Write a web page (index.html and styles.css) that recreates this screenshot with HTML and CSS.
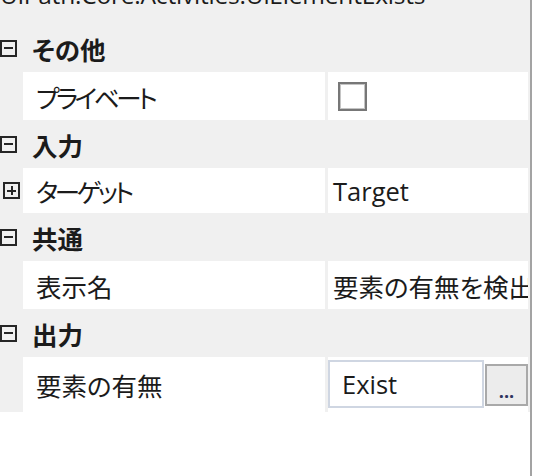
FILE: index.html
```html
<!DOCTYPE html>
<html lang="ja">
<head>
  <meta charset="UTF-8" />
  <title>プロパティ - UiElementExists</title>
  <link rel="stylesheet" href="styles.css">
</head>
<body>
  <div class="panel">
    <div class="title"><span>UiPath.Core.Activities.UiElementExists</span></div>

    <div class="grid">
      <!-- その他 -->
      <div class="cat">
        <span class="toggle minus"></span>
        <span class="cat-name">その他</span>
      </div>
      <div class="prop">
        <div class="gutter"></div>
        <div class="name kana">プライベート</div>
        <div class="value"><span class="check"></span></div>
      </div>

      <!-- 入力 -->
      <div class="cat">
        <span class="toggle minus"></span>
        <span class="cat-name">入力</span>
      </div>
      <div class="prop prop-short">
        <div class="gutter"><span class="toggle plus"></span></div>
        <div class="name kana">ターゲット</div>
        <div class="value">Target</div>
      </div>

      <!-- 共通 -->
      <div class="cat">
        <span class="toggle minus"></span>
        <span class="cat-name">共通</span>
      </div>
      <div class="prop">
        <div class="gutter"></div>
        <div class="name">表示名</div>
        <div class="value">要素の有無を検出</div>
      </div>

      <!-- 出力 -->
      <div class="cat">
        <span class="toggle minus"></span>
        <span class="cat-name">出力</span>
      </div>
      <div class="prop prop-edit">
        <div class="gutter"></div>
        <div class="name">要素の有無</div>
        <div class="value editor">
          <div class="textbox">Exist</div>
          <button class="more">...</button>
        </div>
      </div>
    </div>
  </div>
</body>
</html>
```

FILE: styles.css
```css
/*
  ---------------------
  GLOBAL
  ---------------------
*/
* {
  margin: 0;
  padding: 0;
  box-sizing: border-box;
}

body {
  background: #fff;
  font-family: "Open Sans", "Noto Sans CJK JP", sans-serif;
  font-feature-settings: "palt" 1;
  font-size: 25.5px;
  color: #1b1b1b;
  overflow: hidden;
}

.panel {
  width: 532px;
  height: 476px;
  border-right: 2px solid #a3a3a3;
  background: #fff;
}

/* Activity type name, clipped by the top edge */
.title {
  height: 24px;
  background: #f0f0f0;
  overflow: hidden;
  white-space: nowrap;
}

.title span {
  display: block;
  line-height: 24px;
  margin-top: -17px;
  font-size: 24.5px;
  letter-spacing: -0.2px;
}

/*
  ---------------------
  PROPERTY GRID
  ---------------------
*/
.grid {
  background: #f0f0f0;
  padding-right: 2px;
}

.cat {
  height: 48px;
  display: flex;
  align-items: center;
}

.cat-name {
  font-weight: 700;
  margin-left: 15px;
}

.prop {
  height: 48px;
  display: flex;
}

.prop-short {
  height: 45px;
}

.prop-edit {
  height: 55px;
}

.gutter {
  width: 23px;
  display: flex;
  align-items: center;
  padding-left: 3px;
}

.name {
  width: 302px;
  background: #fff;
  display: flex;
  align-items: center;
  padding-left: 13px;
}

/* Katakana names are set narrow, as in the UI font */
.name.kana {
  letter-spacing: -3.4px;
}

.value {
  flex: 1;
  margin-left: 3px;
  background: #fff;
  display: flex;
  align-items: center;
  padding-left: 5px;
  overflow: hidden;
  white-space: nowrap;
}

/* Expand / collapse boxes */
.toggle {
  width: 17px;
  height: 17px;
  border: 2px solid #262626;
  position: relative;
  flex: none;
}

.toggle::before,
.toggle::after {
  content: '';
  position: absolute;
  background: #262626;
}

.toggle::before {
  left: 2px;
  right: 2px;
  top: 5.5px;
  height: 2px;
}

.toggle.plus::after {
  top: 2px;
  bottom: 2px;
  left: 5.5px;
  width: 2px;
}

/* Unchecked checkbox */
.check {
  width: 29px;
  height: 29px;
  margin-left: 5px;
  border: 2px solid #777;
  box-shadow: inset 0 0 0 1px #c4c4c4;
  background: #fff;
}

/* Editor with text box and "..." button */
.editor {
  padding-left: 0;
  align-items: stretch;
}

.textbox {
  width: 156px;
  margin: 3px 0 4px;
  border: 2px solid #cfd6e2;
  display: flex;
  align-items: center;
  padding-left: 12px;
}

.more {
  width: 43px;
  margin: 7px 0 6px 1px;
  border: 2px solid #a9a9a9;
  background: #ececec;
  font-family: inherit;
  font-size: 18px;
  font-weight: 700;
  color: #2f3560;
  display: flex;
  align-items: flex-end;
  justify-content: center;
  padding-bottom: 4px;
  line-height: 1;
}
```
